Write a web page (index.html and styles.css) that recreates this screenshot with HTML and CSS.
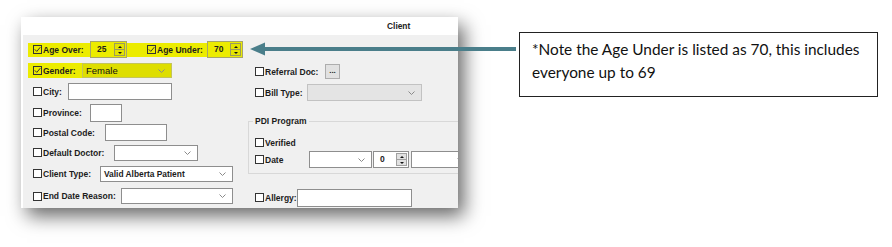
FILE: index.html
```html
<!DOCTYPE html>
<html lang="en">
<head>
    <meta charset="UTF-8">
    <title>Client filter</title>
    <link rel="stylesheet" href="styles.css">
</head>
<body>
<div class="page">
    <div class="panel">
        <div class="panel-head">Client</div>
        <div class="panel-body">
            <div class="col-left">
                <div class="row row-hl">
                    <div class="hl hl-age">
                        <span class="chk on"><svg width="7" height="7" viewBox="0 0 7 7"><polyline points="0.8,3.4 2.8,5.4 6.3,1.2"/></svg></span>
                        <span class="lbl w-ageover">Age Over:</span>
                        <span class="spin spin-yl w-spin1"><span class="spin-val">25</span><span class="spin-btns"><i class="sb up"></i><i class="sb down"></i></span></span>
                        <span class="chk on chk-under"><svg width="7" height="7" viewBox="0 0 7 7"><polyline points="0.8,3.4 2.8,5.4 6.3,1.2"/></svg></span>
                        <span class="lbl w-ageunder">Age Under:</span>
                        <span class="spin spin-yl w-spin2"><span class="spin-val">70</span><span class="spin-btns"><i class="sb up"></i><i class="sb down"></i></span></span>
                    </div>
                </div>
                <div class="row row-hl">
                    <div class="hl hl-gender">
                        <span class="chk on"><svg width="7" height="7" viewBox="0 0 7 7"><polyline points="0.8,3.4 2.8,5.4 6.3,1.2"/></svg></span>
                        <span class="lbl w-gender">Gender:</span>
                        <span class="sel sel-yl w-gendersel"><span class="sel-val">Female</span><svg class="chev" width="7" height="4" viewBox="0 0 7 4"><polyline points="0.5,0.5 3.5,3.5 6.5,0.5"/></svg></span>
                    </div>
                </div>
                <div class="row">
                    <span class="chk"></span><span class="lbl w-city">City:</span>
                    <span class="txt w-citybox"></span>
                </div>
                <div class="row">
                    <span class="chk"></span><span class="lbl w-prov">Province:</span>
                    <span class="txt txt-tall w-provbox"></span>
                </div>
                <div class="row">
                    <span class="chk"></span><span class="lbl w-postal">Postal Code:</span>
                    <span class="txt w-postalbox"></span>
                </div>
                <div class="row">
                    <span class="chk"></span><span class="lbl w-doctor">Default Doctor:</span>
                    <span class="sel w-doctorsel"><span class="sel-val"></span><svg class="chev" width="7" height="4" viewBox="0 0 7 4"><polyline points="0.5,0.5 3.5,3.5 6.5,0.5"/></svg></span>
                </div>
                <div class="row">
                    <span class="chk"></span><span class="lbl w-type">Client Type:</span>
                    <span class="sel w-typesel"><span class="sel-val">Valid Alberta Patient</span><svg class="chev" width="7" height="4" viewBox="0 0 7 4"><polyline points="0.5,0.5 3.5,3.5 6.5,0.5"/></svg></span>
                </div>
                <div class="row">
                    <span class="chk"></span><span class="lbl w-reason">End Date Reason:</span>
                    <span class="sel w-reasonsel"><span class="sel-val"></span><svg class="chev" width="7" height="4" viewBox="0 0 7 4"><polyline points="0.5,0.5 3.5,3.5 6.5,0.5"/></svg></span>
                </div>
            </div>

            <div class="col-right">
                <div class="row rrow">
                    <span class="chk"></span><span class="lbl w-referral">Referral Doc:</span>
                    <span class="btn-dots">...</span>
                </div>
                <div class="row rrow">
                    <span class="chk"></span><span class="lbl w-bill">Bill Type:</span>
                    <span class="sel sel-off w-billsel"><span class="sel-val"></span><svg class="chev" width="7" height="4" viewBox="0 0 7 4"><polyline points="0.5,0.5 3.5,3.5 6.5,0.5"/></svg></span>
                </div>
                <fieldset class="group">
                    <legend>PDI Program</legend>
                    <div class="row grow">
                        <span class="chk"></span><span class="lbl">Verified</span>
                    </div>
                    <div class="row grow">
                        <span class="chk"></span><span class="lbl w-date">Date</span>
                        <span class="sel sel-date w-month"><span class="sel-val"></span><svg class="chev" width="7" height="4" viewBox="0 0 7 4"><polyline points="0.5,0.5 3.5,3.5 6.5,0.5"/></svg></span>
                        <span class="spin w-day"><span class="spin-val">0</span><span class="spin-btns"><i class="sb up"></i><i class="sb down"></i></span></span>
                        <span class="sel sel-date w-year"><span class="sel-val"></span><svg class="chev" width="7" height="4" viewBox="0 0 7 4"><polyline points="0.5,0.5 3.5,3.5 6.5,0.5"/></svg></span>
                    </div>
                </fieldset>
                <div class="row rrow allergy">
                    <span class="chk"></span><span class="lbl w-allergy">Allergy:</span>
                    <span class="txt txt-tall w-allergybox"></span>
                </div>
            </div>
        </div>
    </div>

    <div class="note">*Note the Age Under is listed as 70, this includes<br>everyone up to 69</div>

    <svg class="arrow" width="272" height="18" viewBox="0 0 272 18">
        <polygon points="2,9 17,2.5 17,15.5"/>
        <rect x="16" y="7" width="252" height="4"/>
    </svg>
</div>
</body>
</html>
```

FILE: styles.css
```css
body {
    margin: 0;
    background-color: #ffffff;
    font-family: "Liberation Sans", Arial, sans-serif;
}
.page {
    position: relative;
    display: flex;
    align-items: flex-start;
    width: 892px;
    height: 247px;
    padding: 17px 0 0 21px;
    box-sizing: border-box;
}

/* the screenshot of the form */
.panel {
    width: 437px;
    height: 191px;
    flex: none;
    display: flex;
    flex-direction: column;
    background-color: #ffffff;
    box-shadow: 6px 8px 18px rgba(0, 0, 0, 0.6);
    overflow: hidden;
}
.panel-head {
    height: 18px;
    padding-left: 366px;
    font-size: 8.4px;
    font-weight: bold;
    line-height: 18px;
    color: #222;
}
.panel-body {
    flex: 1;
    display: flex;
    margin-left: 2px;
    background-color: #f0f0f0;
}
.col-left {
    width: 225px;
    flex: none;
    box-sizing: border-box;
    padding: 4px 0 0 5px;
    display: grid;
    grid-template-rows: 21px 21px 21px 21px 19px 21px 21px 24px;
}
.col-right {
    flex: none;
    width: 260px;
    padding-top: 26px;
}
.row {
    display: flex;
    align-items: center;
    padding-left: 5px;
}
.row-hl {
    padding-left: 0;
}
.rrow {
    height: 21px;
    padding-left: 7px;
}
.allergy {
    margin-top: 13px;
}

/* yellow highlight */
.hl {
    display: flex;
    align-items: center;
    padding-left: 5px;
    background-color: #ecec00;
}
.hl-age {
    height: 14px;
}
.hl-gender {
    height: 15px;
}

/* checkbox */
.chk {
    width: 9px;
    height: 9px;
    flex: none;
    box-sizing: border-box;
    border: 1px solid #333;
    background-color: #fff;
    display: flex;
    align-items: center;
    justify-content: center;
}
.chk.on {
    background-color: transparent;
}
.chk svg polyline {
    fill: none;
    stroke: #333;
    stroke-width: 1;
}
.chk-under {
    margin-left: 20px;
}

.lbl {
    margin-left: 1px;
    font-size: 8.5px;
    font-weight: bold;
    color: #1c1c1c;
    white-space: nowrap;
    flex: none;
}
.w-ageover { width: 47px; }
.w-ageunder { width: 50px; }
.w-gender { width: 39px; }
.w-city { width: 25px; }
.w-prov { width: 47px; }
.w-postal { width: 62px; }
.w-doctor { width: 71px; }
.w-type { width: 57px; }
.w-reason { width: 78px; }
.w-referral { width: 60px; }
.w-bill { width: 42px; }
.w-date { width: 44px; }
.w-allergy { width: 32px; }

/* text boxes */
.txt {
    height: 17px;
    flex: none;
    box-sizing: border-box;
    background-color: #fff;
    border: 1px solid #8e8e8e;
}
.txt-tall {
    height: 18px;
}
.w-citybox { width: 104px; }
.w-provbox { width: 32px; }
.w-postalbox { width: 62px; }
.w-allergybox { width: 115px; }

/* combo boxes */
.sel {
    height: 16px;
    flex: none;
    box-sizing: border-box;
    display: flex;
    align-items: center;
    justify-content: space-between;
    padding: 0 6px 0 3px;
    background-color: #fff;
    border: 1px solid #8e8e8e;
    font-size: 8.4px;
    font-weight: bold;
    color: #1c1c1c;
}
.sel .chev polyline {
    fill: none;
    stroke: #8a8a8a;
    stroke-width: 1;
}
.sel-yl {
    height: 15px;
    background-color: #dede00;
    border-color: #c4c45a;
    font-weight: normal;
    font-size: 9.5px;
    color: #111;
}
.sel-off {
    height: 17px;
    background-color: #e4e4e4;
    border-color: #c2c2c2;
}
.w-gendersel { width: 90px; }
.w-doctorsel { width: 84px; }
.w-typesel { width: 133px; }
.w-reasonsel { width: 112px; }
.w-billsel { width: 115px; }
.w-month { width: 63px; }
.w-year { width: 60px; margin-left: 2px; }
.sel-date {
    height: 17px;
}

/* numeric up/down */
.spin {
    height: 17px;
    flex: none;
    box-sizing: border-box;
    display: flex;
    background-color: #fff;
    border: 1px solid #8e8e8e;
    font-size: 8.5px;
    font-weight: bold;
    color: #1c1c1c;
}
.spin-yl {
    background-color: #ecec00;
    border-color: #a6a66a;
}
.w-spin1 { width: 37px; }
.w-spin2 { width: 36px; }
.w-day { width: 36px; margin-left: 1px; }
.spin-val {
    flex: 1;
    padding-left: 6px;
    line-height: 15px;
}
.spin-btns {
    width: 11px;
    display: flex;
    flex-direction: column;
    padding: 1px 1px 1px 0;
}
.sb {
    flex: 1;
    display: flex;
    align-items: center;
    justify-content: center;
    border: 1px solid #a0a0a0;
    background-color: #e1e1e1;
}
.spin-yl .sb {
    background-color: #e4e400;
    border-color: #9c9c5c;
}
.sb.down {
    border-top: none;
}
.sb.up::after,
.sb.down::after {
    content: "";
    border-left: 2px solid transparent;
    border-right: 2px solid transparent;
}
.sb.up::after {
    border-bottom: 2px solid #111;
}
.sb.down::after {
    border-top: 2px solid #111;
}

.btn-dots {
    width: 15px;
    height: 15px;
    box-sizing: border-box;
    border: 1px solid #adadad;
    background-color: #e1e1e1;
    font-size: 8px;
    font-weight: bold;
    text-align: center;
    line-height: 11px;
    color: #222;
}

/* PDI Program group */
.group {
    margin: 13px 0 0 0;
    padding: 8px 0 5px 6px;
    width: 240px;
    border: 1px solid #d8d8d8;
}
.group legend {
    margin-left: -2px;
    padding: 0 2px;
    font-size: 8.5px;
    font-weight: bold;
    line-height: 10px;
    color: #1c1c1c;
}
.grow {
    height: 17px;
    padding-left: 0;
}

/* callout */
.note {
    margin: 15px 0 0 61px;
    width: 359px;
    height: 65px;
    box-sizing: border-box;
    padding: 5px 0 0 12px;
    border: 1px solid #222;
    font-family: Lato, "Liberation Sans", sans-serif;
    font-size: 15.4px;
    line-height: 23px;
    color: #111;
}
.arrow {
    position: absolute;
    left: 248px;
    top: 40px;
}
.arrow polygon,
.arrow rect {
    fill: #4a7e8a;
}
```
